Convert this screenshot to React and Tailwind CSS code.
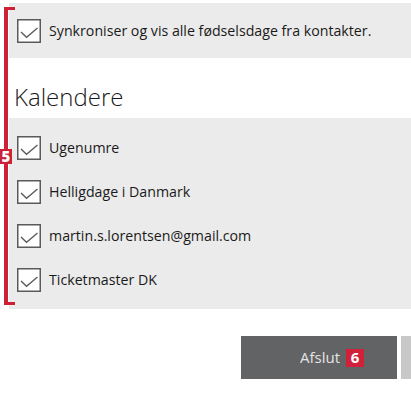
const font = { fontFamily: '"Open Sans", "Noto Sans", sans-serif' };

const CheckBox = () => (
  <svg width="24" height="24" viewBox="0 0 24 24" className="shrink-0">
    <rect x="0.75" y="0.75" width="22.5" height="22.5" fill="#ffffff" stroke="#5a5a5a" strokeWidth="1.5" />
    <polyline points="4,13 9.5,18.3 20.5,9" fill="none" stroke="#5a5a5a" strokeWidth="1.3" />
  </svg>
);

const Row = ({ label }) => (
  <div className="flex h-[44px] items-center gap-[8px] pl-[8px]">
    <CheckBox />
    <span className="text-[14.2px] text-[#1a1a1a]">{label}</span>
  </div>
);

const calendars = [
  "Ugenumre",
  "Helligdage i Danmark",
  "martin.s.lorentsen@gmail.com",
  "Ticketmaster DK",
];

export default function App() {
  return (
    <div className="relative h-[393px] w-[411px] overflow-hidden bg-white" style={font}>
      <div className="pl-[9px] pt-[3px]">
        <div className="flex h-[55px] items-center gap-[8px] bg-[#ebebeb] pl-[8px]">
          <CheckBox />
          <span className="text-[14.2px] text-[#1a1a1a]">
            Synkroniser og vis alle fødselsdage fra kontakter.
          </span>
        </div>

        <h2 className="pl-[5px] pt-[24px] pb-[6px] text-[24px] font-light leading-[30px] text-[#1a1a1a]">
          Kalendere
        </h2>

        <div className="bg-[#ebebeb] pt-[8px] pb-[7px]">
          {calendars.map((c) => (
            <Row key={c} label={c} />
          ))}
        </div>

        <div className="mt-[27px] flex justify-end gap-[4px]">
          <button className="flex h-[43px] w-[156px] items-center justify-center gap-[6px] bg-[#626365] pl-[26px] text-[15px] text-[#e4e4e4]">
            Afslut
            <span className="flex h-[18px] w-[18px] items-center justify-center bg-[#d0203a] text-[15px] font-bold text-white">
              6
            </span>
          </button>
          <div className="h-[43px] w-[10px] bg-[#c8c8c8]" />
        </div>
      </div>

      {/* red bracket marker */}
      <div className="absolute left-[4px] top-[7px] h-[298px] w-[11px] border-y-[3px] border-l-[4px] border-[#cc2136]" />
      <div className="absolute left-0 top-[149px] flex h-[15px] w-[12px] items-center justify-center bg-[#cc2136] text-[15px] font-extrabold leading-none text-white">
        5
      </div>
    </div>
  );
}
